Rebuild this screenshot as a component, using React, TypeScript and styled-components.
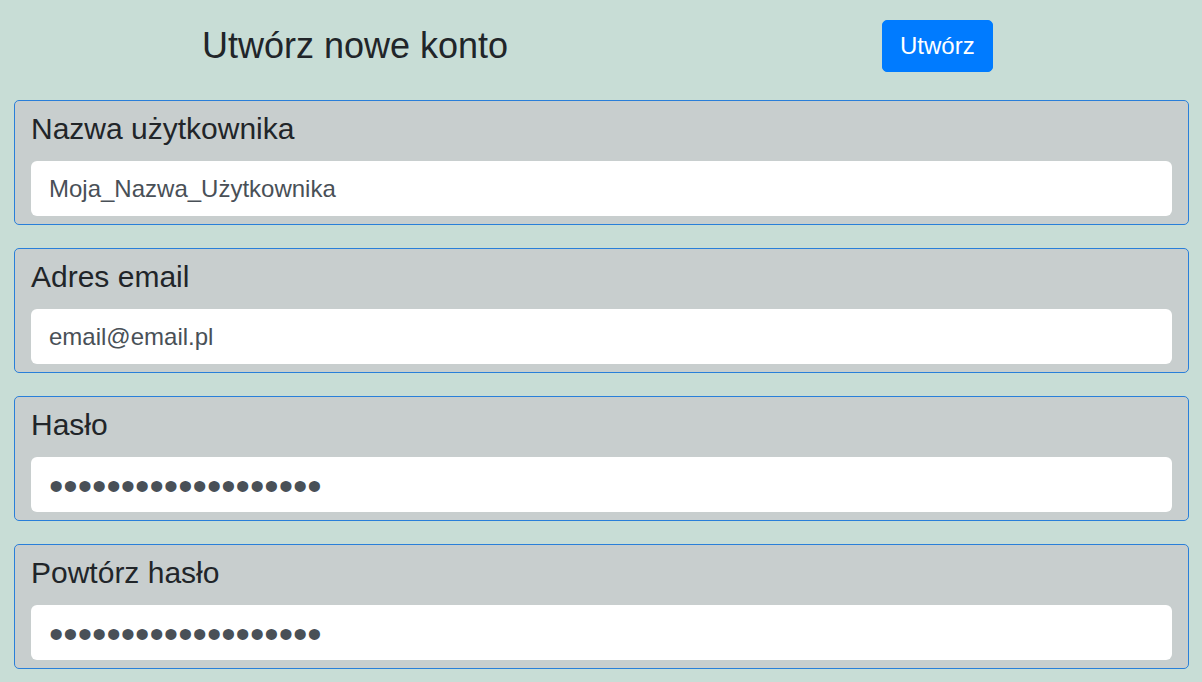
import React from "react";
import styled, { createGlobalStyle } from "styled-components";

const Global = createGlobalStyle`
  html, body { margin: 0; padding: 0; background: #c8ddd6; }
  body { font-family: "Liberation Sans", Arial, sans-serif; color: #212529; }
  * { box-sizing: border-box; }
`;

const Page = styled.div`
  padding: 0 13px 0 14px;
`;

const Header = styled.div`
  display: flex;
  align-items: center;
  height: 100px;
  padding-bottom: 8px;
`;

const Title = styled.h1`
  margin: 0;
  width: 682px;
  text-align: center;
  font-size: 36px;
  font-weight: 400;
  line-height: 1.2;
`;

const HeaderRight = styled.div`
  flex: 1;
  display: flex;
  justify-content: flex-start;
  padding-left: 186px;
`;

const Button = styled.button`
  background: #007bff;
  color: #fff;
  border: 1px solid #007bff;
  border-radius: 5px;
  font-family: inherit;
  font-size: 24px;
  line-height: 1.5;
  padding: 7px 17px;
  cursor: pointer;
`;

const Form = styled.form`
  display: flex;
  flex-direction: column;
  gap: 23px;
`;

const Panel = styled.div`
  background: #c8cece;
  border: 1px solid #2a7fd9;
  border-radius: 5px;
  padding: 11px 16px 8px;
  display: flex;
  flex-direction: column;
`;

const Label = styled.label`
  font-size: 30px;
  line-height: 34px;
  margin-bottom: 15px;
`;

const Input = styled.input<{ $secret?: boolean }>`
  height: 55px;
  border: none;
  border-radius: 6px;
  background: #fff;
  color: #495057;
  font-family: inherit;
  font-size: ${(p) => (p.$secret ? "41px" : "24px")};
  padding: ${(p) => (p.$secret ? "3px 17px 0 18px" : "0 18px")};
  outline: none;
`;

const fields = [
  { label: "Nazwa użytkownika", type: "text", value: "Moja_Nazwa_Użytkownika" },
  { label: "Adres email", type: "email", value: "email@email.pl" },
  { label: "Hasło", type: "password", value: "1234567890123456789" },
  { label: "Powtórz hasło", type: "password", value: "1234567890123456789" },
];

export default function App() {
  return (
    <>
      <Global />
      <Page>
        <Header>
          <Title>Utwórz nowe konto</Title>
          <HeaderRight>
            <Button type="button">Utwórz</Button>
          </HeaderRight>
        </Header>
        <Form>
          {fields.map((f) => (
            <Panel key={f.label}>
              <Label>{f.label}</Label>
              <Input
                type={f.type}
                defaultValue={f.value}
                $secret={f.type === "password"}
                readOnly
              />
            </Panel>
          ))}
        </Form>
      </Page>
    </>
  );
}
